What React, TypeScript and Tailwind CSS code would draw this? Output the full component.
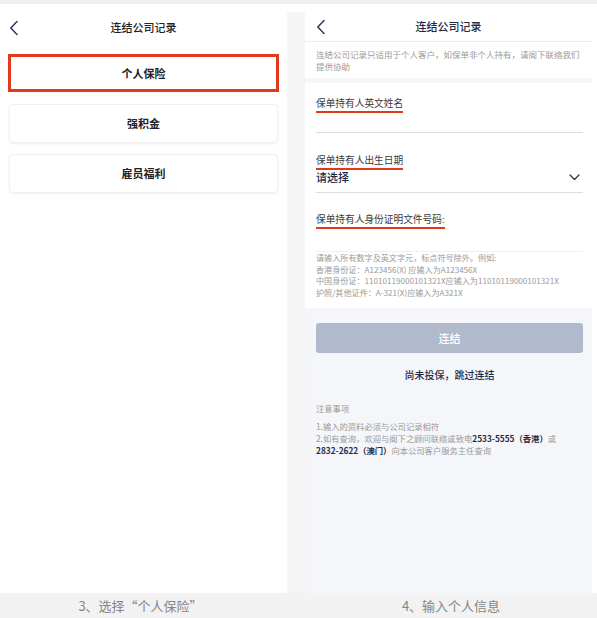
import React from "react";

const font = { fontFamily: '"Noto Sans CJK SC", "Noto Sans", sans-serif' };

function Back() {
  return (
    <svg width="10" height="16" viewBox="0 0 10 16" fill="none">
      <path d="M8 1.5L1.8 8L8 14.5" stroke="#2b3a58" strokeWidth="1.5" strokeLinecap="round" strokeLinejoin="round" />
    </svg>
  );
}

function Chevron() {
  return (
    <svg width="11" height="7" viewBox="0 0 11 7" fill="none">
      <path d="M1 1L5.5 5.5L10 1" stroke="#2b3a58" strokeWidth="1.4" strokeLinecap="round" strokeLinejoin="round" />
    </svg>
  );
}

function Label({ children }: { children: React.ReactNode }) {
  return (
    <div className="w-fit border-b-[2px] border-[#e0391c] pb-[2px] text-[9.7px] leading-[12px] text-[#3a3a3a]">
      {children}
    </div>
  );
}

export default function App() {
  return (
    <div className="w-[597px] h-[618px] bg-[#f2f2f2] flex flex-col overflow-hidden" style={font}>
      <div className="h-[4px] bg-[#f0f0f0]" />
      <div className="flex h-[589px] bg-white">
        {/* Left panel */}
        <div className="w-[287px] bg-white flex flex-col">
          <div className="h-[38px] flex items-center relative pt-[8px]">
            <div className="absolute left-[9px] top-[16px]">
              <Back />
            </div>
            <div className="flex-1 text-center text-[11px] text-[#222] font-medium">连结公司记录</div>
          </div>
          <div className="mx-[8px] mt-[12px] h-[38px] border-[3px] border-[#e3391d] flex items-center justify-center text-[11px] font-bold text-[#222]">
            个人保险
          </div>
          <div className="mx-[9px] mt-[12px] h-[39px] rounded-[4px] bg-white border border-[#f0f0f0] shadow-[0_1px_3px_rgba(0,0,0,0.06)] flex items-center justify-center text-[11px] font-bold text-[#222]">
            强积金
          </div>
          <div className="mx-[9px] mt-[11px] h-[39px] rounded-[4px] bg-white border border-[#f0f0f0] shadow-[0_1px_3px_rgba(0,0,0,0.06)] flex items-center justify-center text-[11px] font-bold text-[#222]">
            雇员福利
          </div>
        </div>
        {/* Right wrapper */}
        <div className="flex-1 flex pt-[8px] pr-[5px]">
          <div className="w-[18px] bg-[#f5f5f5]" />
          <div className="flex-1 flex flex-col bg-[#f5f6f9]">
            <div className="bg-white">
              <div className="h-[30px] relative flex items-center border-b border-[#eeeeee]">
                <div className="absolute left-[11px] top-[7px]">
                  <Back />
                </div>
                <div className="flex-1 text-center text-[11px] font-medium text-[#1f2b45]">连结公司记录</div>
              </div>
              <div className="h-[36px] px-[11px] pt-[6px] text-[8.5px] leading-[12px] text-[#9a9a9a]">
                连结公司记录只适用于个人客户，如保单非个人持有，请阁下联络我们
                <br />
                提供协助
              </div>
              <div className="h-[5px] bg-[#f6f6f6]" />
              <div className="pl-[11px] pr-[9px]">
                <div className="pt-[14px] h-[50px] border-b border-[#dddddd]">
                  <Label>保单持有人英文姓名</Label>
                </div>
                <div className="pt-[21px] h-[60px] border-b border-[#dddddd]">
                  <Label>保单持有人出生日期</Label>
                  <div className="flex items-center justify-between">
                    <span className="text-[11px] leading-[14px] font-medium text-[#1f2b45]">请选择</span>
                    <span className="mr-[3px]">
                      <Chevron />
                    </span>
                  </div>
                </div>
                <div className="pt-[20px] h-[59px] border-b border-[#f0f0f0]">
                  <Label>保单持有人身份证明文件号码:</Label>
                </div>
                <div className="pt-[0px] h-[56px] text-[8.1px] leading-[11.6px] text-[#9a9a9a]">
                  <div>请输入所有数字及英文字元，标点符号除外。例如:</div>
                  <div>香港身份证：A123456(X) 应输入为A123456X</div>
                  <div>中国身份证：11010119000101321X应输入为11010119000101321X</div>
                  <div>护照/其他证件：A-321(X)应输入为A321X</div>
                </div>
              </div>
            </div>
            <div className="pl-[11px] pr-[9px] pt-[15px]">
              <div className="h-[30px] rounded-[3px] bg-[#b1bacd] flex items-center justify-center text-[11px] font-medium text-white">
                连结
              </div>
              <div className="mt-[15px] text-center text-[10px] leading-[14px] font-medium text-[#1f2b45]">
                尚未投保，跳过连结
              </div>
              <div className="mt-[20px] text-[8.3px] leading-[12px] text-[#9a9a9a]">注意事项</div>
              <div className="mt-[6px] text-[8.3px] leading-[12px] text-[#9a9a9a]">
                <div>1.输入的资料必须与公司记录相符</div>
                <div>
                  2.如有查询，欢迎与阁下之顾问联络或致电
                  <span className="font-bold text-[#1f2b45]">2533-5555（香港）</span>或
                </div>
                <div>
                  <span className="font-bold text-[#1f2b45]">2832-2622（澳门）</span>向本公司客户服务主任查询
                </div>
              </div>
            </div>
          </div>
        </div>
      </div>
      <div className="flex-1 flex items-center bg-[#f2f2f2]">
        <div className="w-[287px] text-center text-[13px] text-[#858585] pr-[6px]">3、选择“个人保险”</div>
        <div className="flex-1 text-center text-[13px] text-[#858585] pl-[18px]">4、输入个人信息</div>
      </div>
    </div>
  );
}
